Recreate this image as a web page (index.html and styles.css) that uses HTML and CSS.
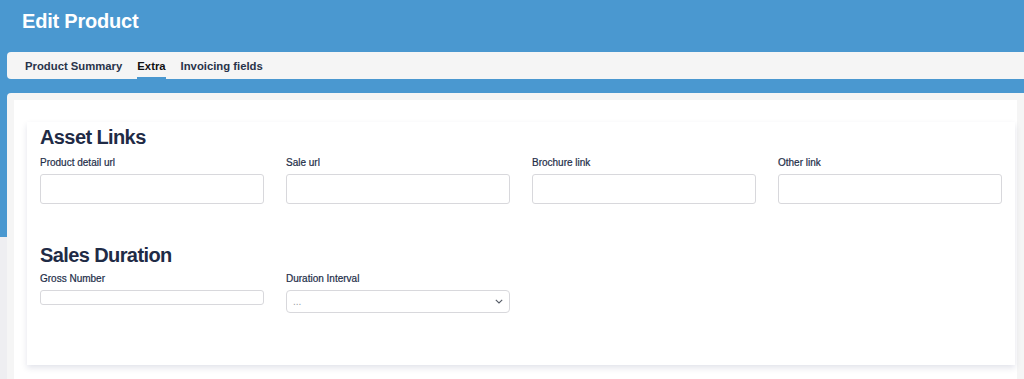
FILE: index.html
```html
<!DOCTYPE html>
<html lang="en">
    <head>
        <meta charset="UTF-8">
        <meta name="viewport" content="width=device-width, initial-scale=1.0">
        <title> Edit Product </title>
        <link rel="stylesheet" href="styles.css">
    </head>

    <body>

        <header class="pageHeader">
            <h1> Edit Product </h1>
        </header>

        <!-- Onglets -->
        <nav class="tabBar">
            <a class="tab" href="#">Product Summary</a>
            <a class="tab tabActive" href="#">Extra</a>
            <a class="tab" href="#">Invoicing fields</a>
        </nav>

        <main class="panel">
            <div class="sheet">
                <section class="card">

                    <h2 class="sectionTitle">Asset Links</h2>
                    <div class="fieldGrid">
                        <div class="field">
                            <label for="detailUrl">Product detail url</label>
                            <input id="detailUrl" class="textInput" type="text">
                        </div>
                        <div class="field">
                            <label for="saleUrl">Sale url</label>
                            <input id="saleUrl" class="textInput" type="text">
                        </div>
                        <div class="field">
                            <label for="brochureLink">Brochure link</label>
                            <input id="brochureLink" class="textInput" type="text">
                        </div>
                        <div class="field">
                            <label for="otherLink">Other link</label>
                            <input id="otherLink" class="textInput" type="text">
                        </div>
                    </div>

                    <h2 class="sectionTitle sectionSecond">Sales Duration</h2>
                    <div class="fieldGrid">
                        <div class="field">
                            <label for="grossNumber">Gross Number</label>
                            <input id="grossNumber" class="textInput smallInput" type="text">
                        </div>
                        <div class="field">
                            <label for="durationInterval">Duration Interval</label>
                            <div class="selectWrap">
                                <select id="durationInterval" class="selectInput">
                                    <option>...</option>
                                </select>
                                <svg class="chevron" width="8" height="5" viewBox="0 0 8 5">
                                    <path d="M0.8 0.8 L4 4 L7.2 0.8" fill="none" stroke="#555b66" stroke-width="1.1"/>
                                </svg>
                            </div>
                        </div>
                    </div>

                </section>
            </div>
        </main>

    </body>
</html>
```

FILE: styles.css
```css
/* Modifications générales */
html, body { margin: 0; }
body
{
    font-family: 'Liberation Sans', Arial, sans-serif;
    background: linear-gradient(to bottom, #4a98d0 0, #4a98d0 237px, #eeeef1 237px);
    height: 379px;
    overflow: hidden;
}
a { text-decoration: none; }

/* Header */
.pageHeader { height: 52px; box-sizing: border-box; padding: 10px 22px 0; }
.pageHeader h1
{
    margin: 0;
    color: #ffffff;
    font-size: 20px;
    line-height: 22px;
    font-weight: 700;
    letter-spacing: -0.2px;
}

/* Onglets */
.tabBar
{
    margin-left: 7px;
    height: 27px;
    display: flex;
    gap: 15px;
    padding-left: 18px;
    background-color: #f5f5f5;
    border-radius: 4px 0 0 4px;
}
.tab
{
    font-size: 11.3px;
    font-weight: 700;
    line-height: 28px;
    color: #28334a;
    box-sizing: border-box;
    border-bottom: 2px solid transparent;
}
.tabActive { color: #111111; border-bottom-color: #4a98d0; }

/* Panneau principal */
.panel
{
    margin: 14px 0 0 7px;
    padding: 7px 7px 0 7px;
    background-color: #f5f5f5;
    border-radius: 4px 0 0 0;
}
.sheet
{
    background-color: #ffffff;
    padding: 22px 2px 30px 13px;
}
.card
{
    background-color: #ffffff;
    padding: 3px 13px 52px;
    box-shadow: 0 3px 6px rgba(40, 50, 100, 0.13);
}

.sectionTitle
{
    margin: 0 0 8px;
    font-size: 20px;
    line-height: 24px;
    font-weight: 700;
    letter-spacing: -0.6px;
    color: #1f2b46;
}
.sectionSecond { margin-top: 39px; margin-bottom: 6px; }

/* Champs */
.fieldGrid
{
    display: grid;
    grid-template-columns: repeat(4, 224px);
    column-gap: 22px;
    align-items: start;
}
.field label
{
    display: block;
    font-size: 10px;
    line-height: 12px;
    color: #222d48;
    -webkit-text-stroke: 0.2px #222d48;
    margin-bottom: 5px;
}
.textInput
{
    display: block;
    width: 100%;
    height: 30px;
    box-sizing: border-box;
    border: 1px solid #d8d8dc;
    border-radius: 3px;
    background-color: #ffffff;
    margin: 0;
}
.smallInput { height: 15px; }

.selectWrap { position: relative; }
.selectInput
{
    display: block;
    width: 100%;
    height: 23px;
    box-sizing: border-box;
    margin: 0;
    padding: 0 0 0 6px;
    border: 1px solid #d8d8dc;
    border-radius: 4px;
    background-color: #ffffff;
    -webkit-appearance: none;
    appearance: none;
    font-family: 'Liberation Sans', Arial, sans-serif;
    font-size: 10px;
    color: #9a9ea6;
}
.chevron { position: absolute; right: 7px; top: 9px; }
```
